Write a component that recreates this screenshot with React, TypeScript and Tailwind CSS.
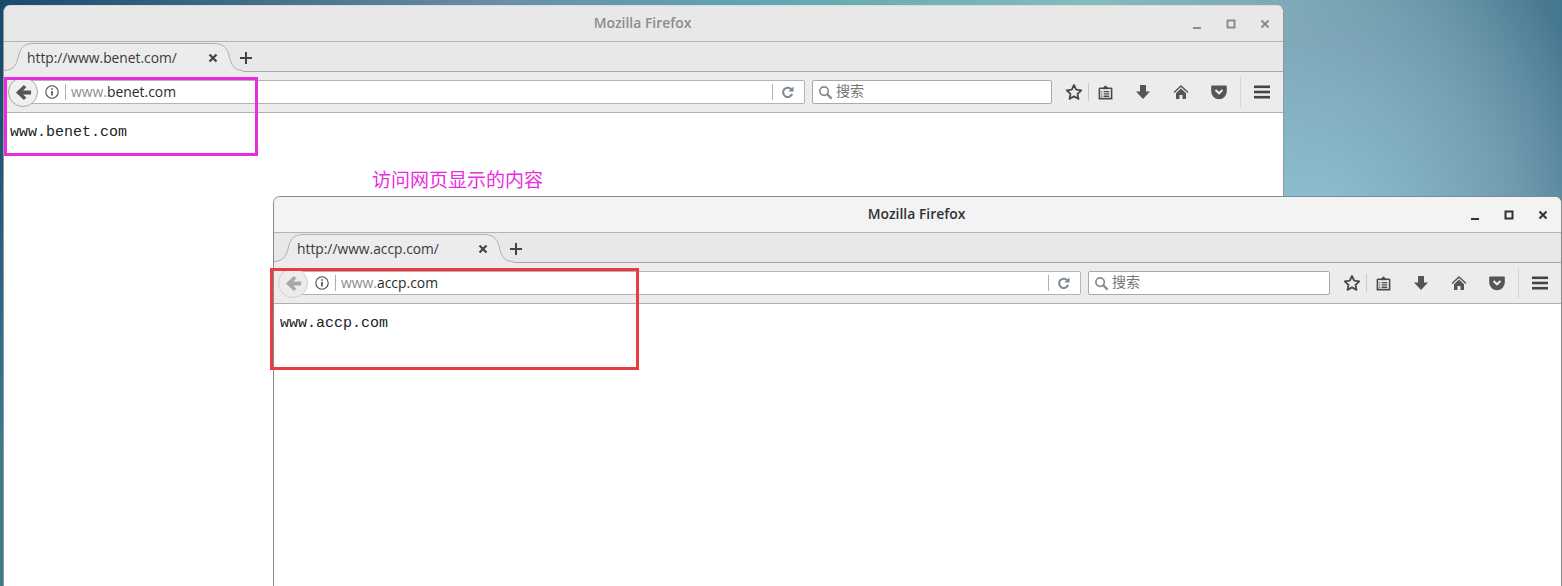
import React from 'react';

const uiFont = '[font-family:"Open_Sans","Noto_Sans_CJK_SC",sans-serif]';

function BackIcon({ className }: { className: string }) {
    return (
        <svg viewBox="0 0 18 18" className={className} fill="currentColor">
            <path d="M9.400 1 1 9l8.400 8 2.600-2.500L8.600 11.200H17V6.800H8.600L12 3.500z" />
        </svg>
    );
}

function InfoIcon() {
    return (
        <svg viewBox="0 0 14 14" className="w-[14px] h-[14px] shrink-0 text-[#4a4a4a]" fill="none" stroke="currentColor">
            <circle cx="7" cy="7" r="6.200" strokeWidth="1.100" />
            <path d="M7 6v4.600" strokeWidth="1.600" />
            <path d="M7 3.200v1.600" strokeWidth="1.600" />
        </svg>
    );
}

function ReloadIcon() {
    return (
        <svg viewBox="0 0 14 14" className="w-[13px] h-[13px] text-[#7d8a94]" fill="none" stroke="currentColor">
            <path d="M11.500 4.200A5 5 0 1 0 12 8.500" strokeWidth="2.300" />
            <path d="M7.800 6h5.700V.500z" fill="currentColor" stroke="none" />
        </svg>
    );
}

function SearchIcon() {
    return (
        <svg viewBox="0 0 16 16" className="w-[15px] h-[15px] shrink-0 text-[#8a8a8a]" fill="none" stroke="currentColor">
            <circle cx="6.500" cy="6.500" r="4.500" strokeWidth="1.800" />
            <path d="m10 10 4.500 4.500" strokeWidth="2.400" />
        </svg>
    );
}

function StarIcon() {
    return (
        <svg viewBox="0 0 18 18" className="w-[18px] h-[18px] text-[#4a4a4a]" fill="none" stroke="currentColor">
            <path d="m9 2 2.200 4.700 5.100.6-3.800 3.500 1 5.100L9 13.400l-4.500 2.500 1-5.100L1.700 7.300l5.100-.6z" strokeWidth="1.800" strokeLinejoin="round" />
        </svg>
    );
}

function LibraryIcon() {
    return (
        <svg viewBox="0 0 16 16" className="w-[15px] h-[15px] text-[#4a4a4a]" fill="none" stroke="currentColor">
            <path d="M2 3.500h12a1 1 0 0 1 .5.5v10.500H1.500V4z" strokeWidth="1.700" />
            <path d="M5 4 8 .8 11 4z" fill="currentColor" strokeWidth="1" />
            <path d="M6 7h6M6 9.500h6M6 12h6M3.500 7h1M3.500 9.500h1M3.500 12h1" strokeWidth="1.400" />
        </svg>
    );
}

function DownloadIcon() {
    return (
        <svg viewBox="0 0 16 16" className="w-[16px] h-[16px] text-[#555]" fill="currentColor">
            <path d="M5 1h6v6.500h4L8 15 1 7.500h4z" />
        </svg>
    );
}

function HomeIcon() {
    return (
        <svg viewBox="0 0 16 16" className="w-[16px] h-[16px] text-[#555]" fill="currentColor">
            <path d="M8 1 0.500 8l1 1L8 3l6.500 6 1-1z" />
            <path d="M8 4.600 3 9.300V15h3.500v-4h3v4H13V9.300z" />
        </svg>
    );
}

function PocketIcon() {
    return (
        <svg viewBox="0 0 16 16" className="w-[16px] h-[16px] text-[#555]">
            <path d="M1.500 1.500h13A1.200 1.200 0 0 1 15.800 3v4.500A7.800 7.800 0 0 1 .2 7.500V3a1.200 1.200 0 0 1 1.300-1.500z" fill="currentColor" />
            <path d="M4.500 6 8 9.300 11.500 6" fill="none" stroke="#ececec" strokeWidth="2" />
        </svg>
    );
}

function MenuIcon() {
    return (
        <svg viewBox="0 0 16 14" className="w-[16px] h-[14px] text-[#444]" fill="currentColor">
            <rect x="0" y="0.500" width="16" height="2.600" />
            <rect x="0" y="5.700" width="16" height="2.600" />
            <rect x="0" y="10.900" width="16" height="2.600" />
        </svg>
    );
}

function Cell({ className, children }: { className: string; children: React.ReactNode }) {
    return <div className={`flex items-center justify-center shrink-0 ${className}`}>{children}</div>;
}

function FirefoxWindow({
    className, titleClass, titleBarClass, controlClass, backClass, backCircleClass, searchClass, url, host, pageText,
}: {
    className: string;
    titleClass: string;
    titleBarClass: string;
    controlClass: string;
    backClass: string;
    backCircleClass: string;
    searchClass: string;
    url: string;
    host: string;
    pageText: string;
}) {
    return (
        <div className={`absolute flex flex-col bg-white rounded-t-[7px] overflow-hidden ${uiFont} ${className}`}>
            {/* title bar */}
            <div className={`relative h-[36px] shrink-0 flex items-center justify-center pr-[2px] border-b border-[#b4b4b4] ${titleBarClass}`}>
                <span className={`text-[13.900px] font-semibold ${titleClass}`}>Mozilla Firefox</span>
                <div className={`absolute right-0 top-0 h-full flex items-center pr-[13px] ${controlClass}`}>
                    <svg viewBox="0 0 10 10" className="w-[10px] h-[10px] mr-[24px] mt-[3px]" fill="currentColor"><rect x="1" y="7" width="8" height="2" /></svg>
                    <svg viewBox="0 0 10 10" className="w-[10px] h-[10px] mr-[24px]" fill="none" stroke="currentColor"><rect x="1.500" y="1.500" width="7" height="7" strokeWidth="2" /></svg>
                    <svg viewBox="0 0 10 10" className="w-[10px] h-[10px]" fill="none" stroke="currentColor"><path d="m1.500 1.500 7 7M8.500 1.500l-7 7" strokeWidth="2" /></svg>
                </div>
            </div>

            {/* tab strip */}
            <div className="relative h-[30px] shrink-0 flex bg-[#e8e8e8] border-b border-[#a8a8a8]">
                <div className="relative w-[235px] h-[30px] shrink-0">
                    <svg viewBox="0 0 239 30" className="absolute left-0 top-0 w-[239px] h-[30px]">
                        <path d="M0 29C10 29 13 22 15 12 17 5 21 1.500 29 1.500H210C218 1.500 223 5 225 13 227 23 230 29 239 29V30H0z" fill="#ececec" />
                        <path d="M0 28.500C10 28.500 13 22 15 12 17 5 21 1.500 29 1.500H210C218 1.500 223 5 225 13 227 23 230 28.500 239 28.500" fill="none" stroke="#b0b0b0" />
                    </svg>
                    <span className="absolute left-[23px] top-[6px] text-[13.800px] leading-[20px] text-[#3a3a3a]">{url}</span>
                    <svg viewBox="0 0 10 10" className="absolute left-[204px] top-[11px] w-[10px] h-[10px] text-[#444]" fill="none" stroke="currentColor"><path d="m1.500 1.500 7 7M8.500 1.500l-7 7" strokeWidth="2.200" /></svg>
                </div>
                <svg viewBox="0 0 14 14" className="relative w-[14px] h-[14px] mt-[9px] text-[#444]" fill="currentColor"><path d="M6 1h2v5h5v2H8v5H6V8H1V6h5z" /></svg>
            </div>

            {/* nav bar */}
            <div className="relative h-[41px] shrink-0 flex items-center bg-[#ececec] border-b border-[#b0b0b0] pl-[4px] pr-[4px]">
                <div className={`relative z-10 w-[30px] h-[30px] rounded-full shrink-0 flex items-center justify-center border ${backCircleClass}`}>
                    <BackIcon className={`w-[17px] h-[17px] ${backClass}`} />
                </div>
                <div className="flex-1 h-[24px] -ml-[12px] flex items-center bg-white border border-[#b4b4b4] rounded-[2px] pl-[18px] pr-[10px]">
                    <InfoIcon />
                    <div className="w-px h-[16px] bg-[#b0b0b0] ml-[6px] mr-[5px]" />
                    <span className="flex-1 text-[13.900px] leading-[20px] text-[#8c8c8c]">www.<span className="text-[#2b2b2b]">{host}</span></span>
                    <div className="w-px h-[16px] bg-[#b0b0b0] mr-[8px]" />
                    <ReloadIcon />
                </div>
                <div className={`h-[24px] ml-[7px] shrink-0 flex items-center gap-[3px] bg-white border border-[#aaaaaa] rounded-[2px] pl-[5px] ${searchClass}`}>
                    <SearchIcon />
                    <span className="text-[14px] leading-[20px] mb-[2px] text-[#777]">搜索</span>
                </div>
                <Cell className="w-[28px] ml-[8px]"><StarIcon /></Cell>
                <div className="w-px h-[18px] bg-[#c8c8c8] shrink-0" />
                <Cell className="w-[32px]"><LibraryIcon /></Cell>
                <Cell className="w-[38px] ml-[3px]"><DownloadIcon /></Cell>
                <Cell className="w-[38px]"><HomeIcon /></Cell>
                <Cell className="w-[38px]"><PocketIcon /></Cell>
                <div className="w-px h-[30px] bg-[#d4d4d4] shrink-0 ml-[2px] mr-[4px]" />
                <Cell className="w-[34px]"><MenuIcon /></Cell>
            </div>

            {/* page */}
            <div className="flex-1 bg-white pl-[6px] pt-[10px]">
                <p className='[font-family:"Liberation_Mono",monospace] text-[15px] leading-[20px] text-[#222]'>{pageText}</p>
            </div>
        </div>
    );
}

export default function App() {
    return (
        <div className="relative w-[1562px] h-[586px] overflow-hidden bg-[radial-gradient(circle_330px_at_1310px_240px,rgba(143,195,216,0.95),rgba(130,170,190,0.7)_60%,rgba(120,160,180,0)_100%),linear-gradient(90deg,#1a4a6c_0px,#6a8fa5_500px,#5fa5b0_750px,#85bdbd_1100px,#7aa8b0_1290px,#45768f_1562px)]">
            {/* wallpaper lightens towards the bottom left */}
            <div className="absolute left-0 top-0 w-[4px] h-full bg-[linear-gradient(180deg,#1a4a6c_60px,#3c7a90_450px)]" />

            <FirefoxWindow
                className="left-[3px] top-[5px] w-[1281px] h-[581px] border-x border-t border-x-[#8f9a9e] border-t-[#dcdcdc]"
                titleBarClass="bg-[#e8e8e8]"
                titleClass="text-[#8c8c8c]"
                controlClass="text-[#8c8c8c]"
                backClass="text-[#555]"
                backCircleClass="bg-[#f0f0f0] border-[#a8a8a8]"
                searchClass="w-[240px]"
                url="http://www.benet.com/"
                host="benet.com"
                pageText="www.benet.com"
            />
            <FirefoxWindow
                className="left-[273px] top-[196px] w-[1289px] h-[390px] border-x border-t border-x-[#8a8a8a] border-t-[#7f8a90] z-10"
                titleBarClass="bg-[#f3f3f3]"
                titleClass="text-[#2e3436]"
                controlClass="text-[#2e3436]"
                backClass="text-[#a8a8a8]"
                backCircleClass="bg-[#ececec] border-[#d0d0d0]"
                searchClass="w-[242px]"
                url="http://www.accp.com/"
                host="accp.com"
                pageText="www.accp.com"
            />

            {/* annotations drawn over the screenshot */}
            <div className="absolute left-[4px] top-[77px] w-[254px] h-[79px] border-[3px] border-[#e62ee0] z-20" />
            <div className="absolute left-[270px] top-[268px] w-[369px] h-[102px] border-[3px] border-[#e83c40] z-20" />
            <span className='absolute left-[372px] top-[167px] text-[19px] leading-[24px] text-[#e62ee0] z-20 [font-family:"Noto_Sans_CJK_SC",sans-serif]'>访问网页显示的内容</span>
        </div>
    );
}
